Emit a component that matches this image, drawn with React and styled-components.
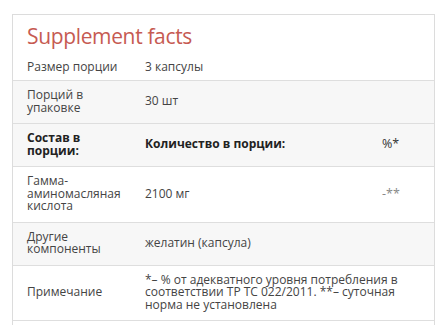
import React from "react";
import styled, { createGlobalStyle } from "styled-components";

const GlobalStyle = createGlobalStyle`
	html, body {
		margin: 0;
		padding: 0;
		background: #fff;
	}
	body {
		font-family: "Open Sans", "Noto Sans", sans-serif;
	}
`;

const rows = [
	{ label: "Размер порции", value: "3 капсулы", first: true },
	{ label: "Порций в упаковке", value: "30 шт", shaded: true },
	{ label: "Состав в порции:", value: "Количество в порции:", pct: "%*", head: true, shaded: true },
	{ label: "Гамма-аминомасляная кислота", value: "2100 мг", pct: "-**" },
	{ label: "Другие компоненты", value: "желатин (капсула)", shaded: true },
	{
		label: "Примечание",
		value: "*– % от адекватного уровня потребления в соответствии ТР ТС 022/2011. **– суточная норма не установлена",
		wide: true,
	},
];

function App() {
	return (
		<Page>
			<GlobalStyle />
			<Card>
				<Title>Supplement facts</Title>
				<Table>
					{rows.map((r, i) => (
						<Row key={i} $shaded={r.shaded} $first={r.first} $head={r.head}>
							<Label>{r.label}</Label>
							<Value $wide={r.wide}>{r.value}</Value>
							{!r.wide && <Pct $head={r.head}>{r.pct}</Pct>}
						</Row>
					))}
				</Table>
			</Card>
		</Page>
	);
}

export default App;

const Page = styled.div`
	padding: 14px 13px 0 12px;
	height: 335px;
	box-sizing: border-box;
	overflow: hidden;
`;

const Card = styled.div`
	width: 423px;
	box-sizing: border-box;
	border: 1px solid #dcdcdc;
	border-bottom: none;
	padding-bottom: 4px;
`;

const Title = styled.h2`
	margin: 0;
	padding: 8px 14px 6px;
	font-size: 21px;
	line-height: 26px;
	font-weight: 400;
	color: #c65a52;
	letter-spacing: -0.35px;
`;

const Table = styled.div`
	display: flex;
	flex-direction: column;
`;

const Row = styled.div`
	display: grid;
	grid-template-columns: 118px 237px 1fr;
	align-items: center;
	padding: ${(p) => (p.$first ? "6px 0 6.5px" : "8px 0 9px")};
	background: ${(p) => (p.$shaded ? "#f7f7f7" : "#fff")};
	border-bottom: 1px solid #dedede;
	font-size: 12px;
	line-height: 12.5px;
	color: ${(p) => (p.$head ? "#222" : "#444")};
	font-weight: ${(p) => (p.$head ? 700 : 400)};
`;

const Label = styled.div`
	padding: 0 4px 0 14px;
`;

const Value = styled.div`
	padding: 0 14px;
	grid-column: ${(p) => (p.$wide ? "2 / span 2" : "auto")};
	padding-right: ${(p) => (p.$wide ? "24px" : "14px")};
`;

const Pct = styled.div`
	padding: 0 14px;
	color: ${(p) => (p.$head ? "#333" : "#888")};
	font-weight: 400;
	font-size: 12.5px;
`;
